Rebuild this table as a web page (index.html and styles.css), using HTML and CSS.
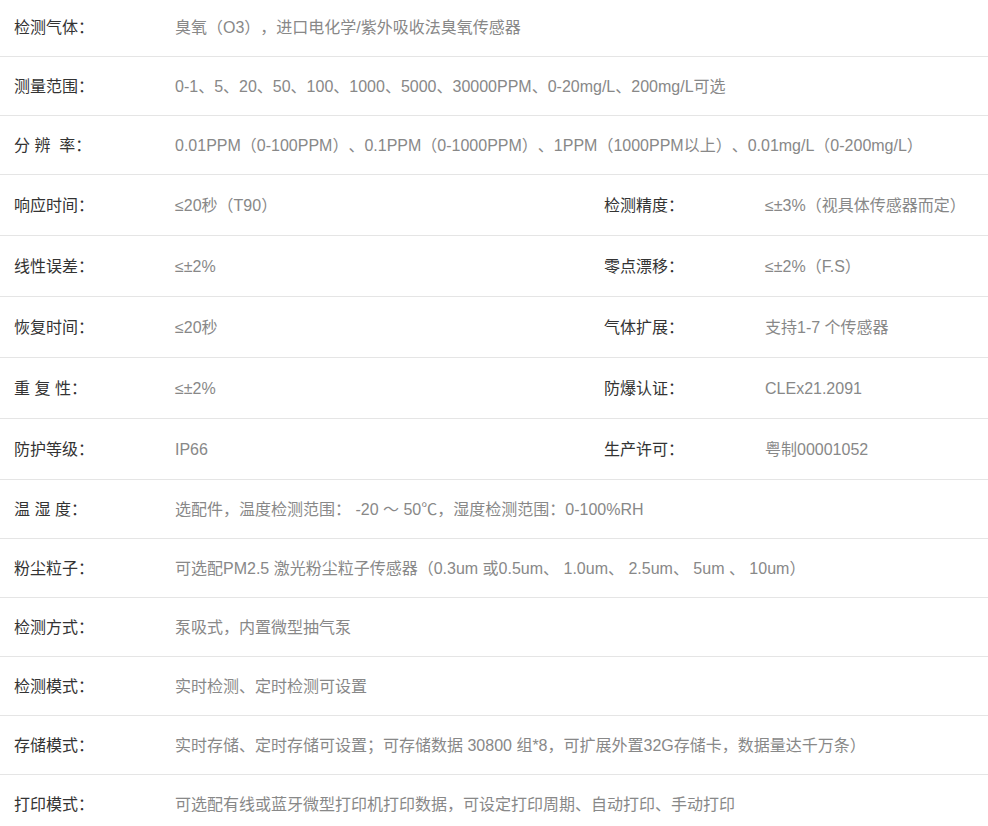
FILE: index.html
```html
<!DOCTYPE html>
<html lang="zh-CN">
<head>
<meta charset="utf-8">
<title>参数</title>
<link rel="stylesheet" href="styles.css">
</head>
<body>
<div class="spec">
  <div class="row">
    <div class="lbl">检测气体：</div>
    <div class="val wide">臭氧（O3），进口电化学/紫外吸收法臭氧传感器</div>
  </div>
  <div class="row">
    <div class="lbl">测量范围：</div>
    <div class="val wide">0-1、5、20、50、100、1000、5000、30000PPM、0-20mg/L、200mg/L可选</div>
  </div>
  <div class="row">
    <div class="lbl">分 辨&nbsp; 率：</div>
    <div class="val wide">0.01PPM（0-100PPM）、0.1PPM（0-1000PPM）、1PPM（1000PPM以上）、0.01mg/L（0-200mg/L）</div>
  </div>
  <div class="row tall">
    <div class="lbl">响应时间：</div>
    <div class="val">≤20秒（T90）</div>
    <div class="lbl">检测精度：</div>
    <div class="val">≤±3%（视具体传感器而定）</div>
  </div>
  <div class="row tall">
    <div class="lbl">线性误差：</div>
    <div class="val">≤±2%</div>
    <div class="lbl">零点漂移：</div>
    <div class="val">≤±2%（F.S）</div>
  </div>
  <div class="row tall">
    <div class="lbl">恢复时间：</div>
    <div class="val">≤20秒</div>
    <div class="lbl">气体扩展：</div>
    <div class="val">支持1-7 个传感器</div>
  </div>
  <div class="row tall">
    <div class="lbl">重 复 性：</div>
    <div class="val">≤±2%</div>
    <div class="lbl">防爆认证：</div>
    <div class="val">CLEx21.2091</div>
  </div>
  <div class="row tall">
    <div class="lbl">防护等级：</div>
    <div class="val">IP66</div>
    <div class="lbl">生产许可：</div>
    <div class="val">粤制00001052</div>
  </div>
  <div class="row">
    <div class="lbl">温 湿 度：</div>
    <div class="val wide">选配件，温度检测范围： -20 ～ 50℃，湿度检测范围：0-100%RH</div>
  </div>
  <div class="row">
    <div class="lbl">粉尘粒子：</div>
    <div class="val wide">可选配PM2.5 激光粉尘粒子传感器（0.3um 或0.5um、 1.0um、 2.5um、 5um 、 10um）</div>
  </div>
  <div class="row">
    <div class="lbl">检测方式：</div>
    <div class="val wide">泵吸式，内置微型抽气泵</div>
  </div>
  <div class="row">
    <div class="lbl">检测模式：</div>
    <div class="val wide">实时检测、定时检测可设置</div>
  </div>
  <div class="row">
    <div class="lbl">存储模式：</div>
    <div class="val wide">实时存储、定时存储可设置；可存储数据 30800 组*8，可扩展外置32G存储卡，数据量达千万条）</div>
  </div>
  <div class="row last">
    <div class="lbl">打印模式：</div>
    <div class="val wide">可选配有线或蓝牙微型打印机打印数据，可设定打印周期、自动打印、手动打印</div>
  </div>
</div>
</body>
</html>
```

FILE: styles.css
```css
html, body {
  margin: 0;
  padding: 0;
  background: #fff;
}
body {
  font-family: "Liberation Sans", "Noto Sans CJK SC", sans-serif;
  font-size: 16px;
  width: 988px;
  overflow: hidden;
  text-spacing-trim: space-all;
}
.spec {
  margin-top: -2px;
}
.row {
  display: grid;
  grid-template-columns: 161px 429px 161px 1fr;
  align-items: center;
  height: 58px;
  border-bottom: 1px solid #e5e5e5;
}
.row.tall {
  height: 60px;
}
.row.last {
  border-bottom: none;
}
.lbl, .val {
  padding-left: 14px;
  padding-top: 2px;
  white-space: nowrap;
  line-height: 20px;
}
.lbl {
  color: #333;
}
.val {
  color: #888;
}
.val.wide {
  grid-column: 2 / 5;
}
```
